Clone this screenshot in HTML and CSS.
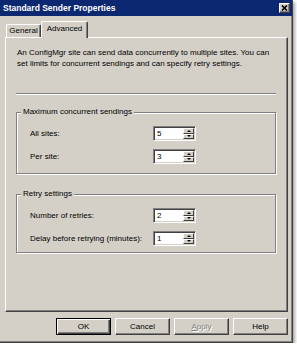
FILE: index.html
```html
<!DOCTYPE html>
<html lang="en">
<head>
    <meta charset="UTF-8">
    <title>Standard Sender Properties</title>
    <link rel="stylesheet" href="styles.css">
</head>
<body>
    <div class="window">
        <div class="titlebar">
            <span class="title">Standard Sender Properties</span>
            <span class="close">
                <svg width="7" height="6" viewBox="0 0 7 6"><path d="M1 0.5 L6 5.5 M6 0.5 L1 5.5" stroke="#000" stroke-width="1.6" fill="none"/></svg>
            </span>
        </div>

        <div class="tabs">
            <div class="tab">General</div>
            <div class="tab active">Advanced</div>
        </div>

        <div class="panel">
            <p class="intro">An ConfigMgr site can send data concurrently to multiple sites. You can<br>set limits for concurrent sendings and can specify retry settings.</p>
            <div class="separator"></div>

            <fieldset class="group">
                <legend>Maximum concurrent sendings</legend>
                <div class="row">
                    <span class="label">All sites:</span>
                    <div class="spin"><span class="value">5</span><span class="arrows"><span class="arrow up"></span><span class="arrow down"></span></span></div>
                </div>
                <div class="row">
                    <span class="label">Per site:</span>
                    <div class="spin"><span class="value">3</span><span class="arrows"><span class="arrow up"></span><span class="arrow down"></span></span></div>
                </div>
            </fieldset>

            <fieldset class="group second">
                <legend>Retry settings</legend>
                <div class="row">
                    <span class="label">Number of retries:</span>
                    <div class="spin"><span class="value">2</span><span class="arrows"><span class="arrow up"></span><span class="arrow down"></span></span></div>
                </div>
                <div class="row">
                    <span class="label">Delay before retrying (minutes):</span>
                    <div class="spin"><span class="value">1</span><span class="arrows"><span class="arrow up"></span><span class="arrow down"></span></span></div>
                </div>
            </fieldset>
        </div>

        <div class="buttons">
            <button class="button default">OK</button>
            <button class="button">Cancel</button>
            <button class="button disabled"><u>A</u>pply</button>
            <button class="button">Help</button>
        </div>
    </div>
</body>
</html>
```

FILE: styles.css
```css
body {
    margin: 0;
    background: #fff;
    font-family: "Liberation Sans", Arial, sans-serif;
    font-size: 8px;
    color: #000;
}

.window {
    width: 293px;
    height: 343px;
    box-sizing: border-box;
    background: #d4d0c8;
    border-right: 1px solid #404040;
    border-bottom: 1px solid #404040;
    box-shadow: inset -1px -1px 0 #808080, 2px 2px 3px rgba(0, 0, 0, 0.35);
    display: flex;
    flex-direction: column;
}

.titlebar {
    height: 16px;
    flex: none;
    background: #0c2870;
    display: flex;
    align-items: center;
    justify-content: space-between;
    padding: 0 2px 0 3px;
}

.title {
    color: #fff;
    font-weight: bold;
    font-size: 8.5px;
}

.close {
    width: 11px;
    height: 10px;
    box-sizing: border-box;
    background: #d4d0c8;
    border: 1px solid;
    border-color: #fff #404040 #404040 #fff;
    box-shadow: inset -1px -1px 0 #808080;
    display: flex;
    align-items: center;
    justify-content: center;
}

.close svg {
    display: block;
}

/* tabs */
.tabs {
    display: flex;
    align-items: flex-end;
    height: 16px;
    margin-top: 5px;
    padding-left: 6px;
    flex: none;
}

.tab {
    width: 35px;
    height: 13px;
    box-sizing: border-box;
    border: 1px solid #fff;
    border-bottom: none;
    border-right-color: #404040;
    border-radius: 2px 2px 0 0;
    box-shadow: inset -1px 0 0 #808080;
    text-align: center;
    line-height: 12px;
}

.tab.active {
    width: 47px;
    height: 17px;
    margin-bottom: -1px;
    position: relative;
    z-index: 1;
    background: #d4d0c8;
    line-height: 14px;
}

.panel {
    height: 275px;
    flex: none;
    margin: 0 4px 0 5px;
    box-sizing: border-box;
    border: 1px solid;
    border-color: #fff #404040 #404040 #fff;
    box-shadow: inset -1px -1px 0 #808080;
    padding: 9px 11px 0 10px;
}

.intro {
    margin: 0 0 0 1px;
    line-height: 11px;
    white-space: nowrap;
}

.separator {
    margin-top: 24px;
    border-top: 1px solid #808080;
    border-bottom: 1px solid #fff;
}

/* group boxes */
.group {
    margin: 11px 0 0 0;
    padding: 8px 0 9px 4px;
    border: 1px solid #808080;
    box-shadow: inset 1px 1px 0 #fff, 1px 1px 0 #fff;
    min-inline-size: 0;
}

.group.second {
    margin-top: 14px;
    padding-bottom: 6px;
}

.group legend {
    padding: 0 2px;
    line-height: 12px;
    background: #d4d0c8;
}

.row {
    display: flex;
    align-items: center;
    height: 15px;
    padding-left: 9px;
}

.row + .row {
    margin-top: 8px;
}

.label {
    width: 123px;
}

.spin {
    width: 43px;
    height: 15px;
    box-sizing: border-box;
    background: #fff;
    border: 1px solid;
    border-color: #808080 #fff #fff #808080;
    box-shadow: inset 1px 1px 0 #404040, inset -1px -1px 0 #d4d0c8;
    padding: 1px 1px 1px 2px;
    display: flex;
}

.value {
    flex: 1;
    padding-left: 1px;
    line-height: 11px;
}

.arrows {
    width: 11px;
    display: flex;
    flex-direction: column;
}

.arrow {
    flex: 1;
    background: #d4d0c8;
    border: 1px solid;
    border-color: #fff #404040 #404040 #fff;
    display: flex;
    align-items: center;
    justify-content: center;
}

.arrow::after {
    content: "";
    border-left: 2px solid transparent;
    border-right: 2px solid transparent;
}

.arrow.up::after {
    border-bottom: 2px solid #000;
}

.arrow.down::after {
    border-top: 2px solid #000;
}

/* dialog buttons */
.buttons {
    display: flex;
    justify-content: flex-end;
    gap: 4px;
    margin: 6px 4px 0 0;
}

.button {
    width: 55px;
    height: 17px;
    box-sizing: border-box;
    padding: 0;
    font: inherit;
    color: #000;
    background: #d4d0c8;
    border: 1px solid;
    border-color: #fff #404040 #404040 #fff;
    box-shadow: inset -1px -1px 0 #808080;
}

.button.default {
    border-color: #000;
    box-shadow: inset 1px 1px 0 #fff, inset -1px -1px 0 #404040, inset -2px -2px 0 #808080;
}

.button.disabled {
    color: #808080;
    text-shadow: 1px 1px 0 #fff;
}
```
